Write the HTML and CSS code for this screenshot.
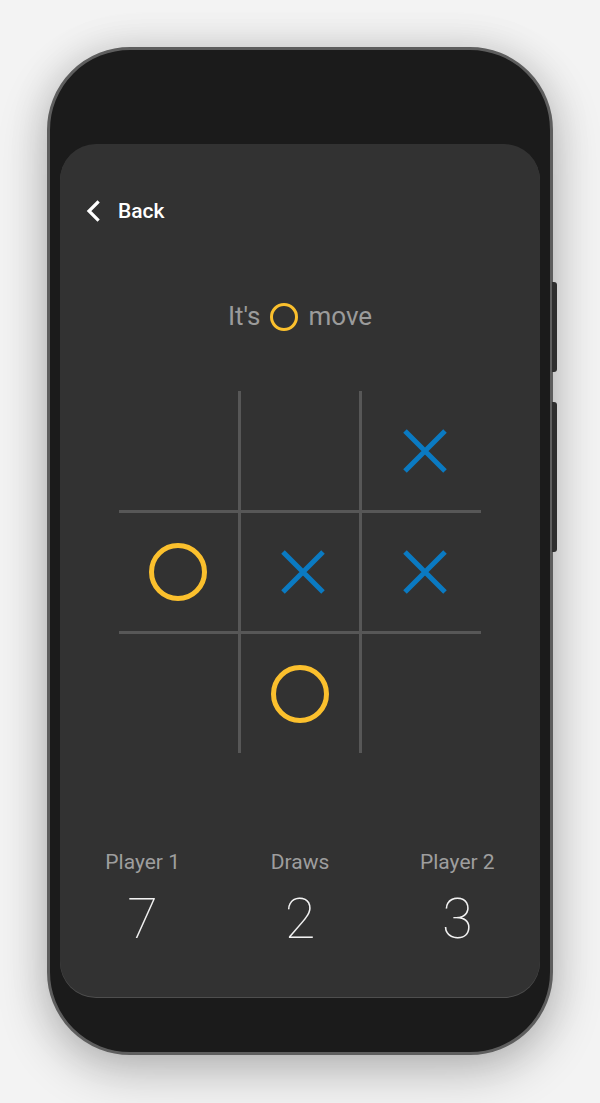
FILE: index.html
```html
<!DOCTYPE html>
<html>
<head>
<meta charset="utf-8">
<link rel="stylesheet" href="styles.css">
</head>
<body>
<div class="phone">
  <span class="side-btn side-btn-a"></span>
  <span class="side-btn side-btn-b"></span>
  <div class="screen">
    <div class="topbar">
      <svg class="chev" width="14" height="22" viewBox="0 0 14 22"><polyline points="11.5,2.5 3,11 11.5,19.5" fill="none" stroke="#fff" stroke-width="3.2" stroke-linecap="square"/></svg>
      <span class="back">Back</span>
    </div>
    <div class="title">
      <span>It's</span>
      <svg class="title-o" width="28" height="28" viewBox="0 0 28 28"><circle cx="14" cy="14" r="12.5" fill="none" stroke="#fbc02d" stroke-width="3"/></svg>
      <span>move</span>
    </div>
    <div class="board">
      <div class="cell"></div>
      <div class="cell"></div>
      <div class="cell"><svg class="mark-x" width="44" height="44" viewBox="0 0 44 44"><path d="M2 2L42 42M42 2L2 42" stroke="#0a7ac2" stroke-width="5"/></svg></div>
      <div class="cell"><svg class="mark-o" width="58" height="58" viewBox="0 0 58 58"><circle cx="29" cy="29" r="26.5" fill="none" stroke="#fbc02d" stroke-width="5"/></svg></div>
      <div class="cell"><svg class="mark-x" width="44" height="44" viewBox="0 0 44 44"><path d="M2 2L42 42M42 2L2 42" stroke="#0a7ac2" stroke-width="5"/></svg></div>
      <div class="cell"><svg class="mark-x" width="44" height="44" viewBox="0 0 44 44"><path d="M2 2L42 42M42 2L2 42" stroke="#0a7ac2" stroke-width="5"/></svg></div>
      <div class="cell"></div>
      <div class="cell"><svg class="mark-o" width="58" height="58" viewBox="0 0 58 58"><circle cx="29" cy="29" r="26.5" fill="none" stroke="#fbc02d" stroke-width="5"/></svg></div>
      <div class="cell"></div>
    </div>
    <div class="scores">
      <div class="score"><div class="label">Player 1</div><div class="num">7</div></div>
      <div class="score"><div class="label">Draws</div><div class="num">2</div></div>
      <div class="score"><div class="label">Player 2</div><div class="num">3</div></div>
    </div>
  </div>
</div>
</body>
</html>
```

FILE: styles.css
```css
html, body {
  margin: 0;
  padding: 0;
}
body {
  background: #f3f3f3;
  font-family: Roboto, "Liberation Sans", sans-serif;
  width: 600px;
  height: 1103px;
  overflow: hidden;
}
.phone {
  position: relative;
  box-sizing: border-box;
  width: 506px;
  height: 1008px;
  margin: 47px 0 0 47px;
  padding: 94px 10px 55px 10px;
  background: #1b1b1b;
  border: 3px solid #5e5e5e;
  border-radius: 83px;
  box-shadow: 0 16px 50px rgba(0, 0, 0, 0.24), 0 0 40px rgba(0, 0, 0, 0.1);
}
.side-btn {
  position: absolute;
  right: -7px;
  width: 5px;
  background: #2e2e2e;
  border-radius: 0 3px 3px 0;
}
.side-btn-a {
  top: 232px;
  height: 90px;
}
.side-btn-b {
  top: 352px;
  height: 150px;
}
.screen {
  height: 853px;
  background: #323232;
  border-radius: 36px;
  box-shadow: 0 1px 0 #4e4e4e;
  display: flex;
  flex-direction: column;
}
.topbar {
  display: flex;
  align-items: center;
  padding: 53px 0 0 26px;
  height: 28px;
}
.chev {
  display: block;
}
.back {
  margin-left: 18px;
  color: #fff;
  font-size: 21px;
  font-weight: 500;
  line-height: 28px;
}
.title {
  margin-top: 73px;
  display: flex;
  justify-content: center;
  align-items: center;
  gap: 10px;
  color: #9b9b9b;
  font-size: 26px;
  line-height: 36px;
}
.title-o {
  display: block;
  margin-top: 2px;
}
.board {
  margin: 57px auto 0;
  width: 362px;
  height: 362px;
  display: grid;
  grid-template-columns: repeat(3, 1fr);
  grid-template-rows: repeat(3, 1fr);
  gap: 3px;
  background: #575757;
}
.cell {
  background: #323232;
  display: flex;
  align-items: center;
  justify-content: center;
}
.mark-x {
  display: block;
  margin: 1px 0 0 6px;
}
.mark-o {
  display: block;
}
.scores {
  margin-top: 97px;
  display: grid;
  grid-template-columns: repeat(3, 1fr);
  padding: 0 4px;
}
.score {
  text-align: center;
}
.label {
  color: #9e9e9e;
  font-size: 21px;
  line-height: 24px;
}
.num {
  margin-top: 13px;
  color: #f2f2f2;
  font-size: 56px;
  font-weight: 100;
  line-height: 64px;
}
```
